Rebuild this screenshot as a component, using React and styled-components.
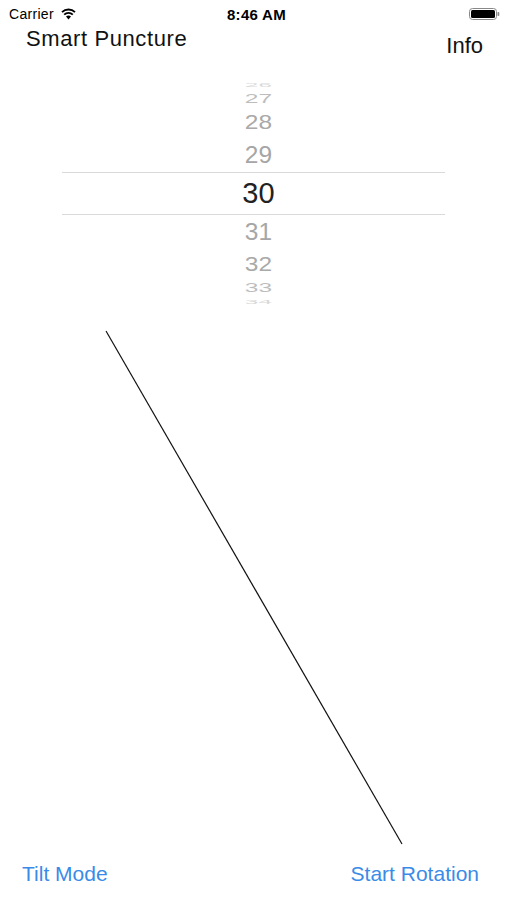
import React from 'react';
import styled, { createGlobalStyle } from 'styled-components';

const Global = createGlobalStyle`
  html, body { margin: 0; padding: 0; background: #fff; }
  body { font-family: "Liberation Sans", Arial, sans-serif; }
`;

const Page = styled.div`
  width: 507px;
  height: 900px;
  display: flex;
  flex-direction: column;
  background: #fff;
  overflow: hidden;
`;

const StatusBar = styled.div`
  height: 28px;
  flex-shrink: 0;
  display: grid;
  grid-template-columns: 1fr auto 1fr;
  align-items: center;
  padding: 0 7px 0 9px;
  font-size: 14px;
  color: #000;
`;

const Carrier = styled.div`
  display: flex;
  align-items: center;
  gap: 7px;
  letter-spacing: 0.3px;
`;

const Clock = styled.div`
  font-weight: bold;
  font-size: 15px;
  letter-spacing: 0.3px;
  padding-left: 4px;
`;

const BatteryWrap = styled.div`
  display: flex;
  justify-content: flex-end;
`;

const Header = styled.div`
  height: 52px;
  flex-shrink: 0;
  display: flex;
  justify-content: space-between;
  padding: 0 24px 0 26px;
`;

const Title = styled.div`
  font-size: 22px;
  line-height: 24px;
  letter-spacing: 0.6px;
  margin-top: -1px;
  color: #111;
`;

const InfoButton = styled.div`
  font-size: 22px;
  line-height: 24px;
  margin-top: 6px;
  color: #111;
`;

const Picker = styled.div`
  margin-left: 62px;
  width: 383px;
  flex-shrink: 0;
  display: flex;
  flex-direction: column;
`;

const Item = styled.div`
  height: ${(p) => p.h}px;
  flex-shrink: 0;
  display: flex;
  align-items: center;
  justify-content: center;
  font-size: ${(p) => (p.selected ? 29 : 24.5)}px;
  color: ${(p) => p.color};
  border-top: ${(p) => (p.selected ? '1px solid #dadada' : 'none')};
  border-bottom: ${(p) => (p.selected ? '1px solid #dadada' : 'none')};
  box-sizing: border-box;
  overflow: visible;
  padding-left: 10px;
`;

const Digits = styled.span`
  display: inline-block;
  transform: scaleY(${(p) => p.sy});
  line-height: 1;
`;

const Canvas = styled.div`
  flex: 1;
  min-height: 0;
  overflow: hidden;

  svg {
    display: block;
  }
`;

const Footer = styled.div`
  height: 44px;
  flex-shrink: 0;
  display: flex;
  align-items: center;
  justify-content: space-between;
  padding: 0 28px 4px 22px;
`;

const Action = styled.div`
  font-size: 21px;
  color: #3a8be8;
`;

const items = [
  { n: 26, h: 10, sy: 0.2, color: '#d9d9d9' },
  { n: 27, h: 19, sy: 0.5, color: '#bdbdbd' },
  { n: 28, h: 29, sy: 0.8, color: '#a9a9a9' },
  { n: 29, h: 34, sy: 0.95, color: '#a6a6a6' },
  { n: 30, h: 43, sy: 1, color: '#222', selected: true },
  { n: 31, h: 34, sy: 0.95, color: '#a6a6a6' },
  { n: 32, h: 31, sy: 0.82, color: '#a9a9a9' },
  { n: 33, h: 17, sy: 0.5, color: '#bdbdbd' },
  { n: 34, h: 11, sy: 0.2, color: '#d9d9d9' },
];

function Wifi() {
  return (
    <svg width="15" height="12" viewBox="0 0 15 12">
      <path d="M7.5 11.5 L5 8.6 A3.6 3.6 0 0 1 10 8.6 Z" fill="#000" />
      <path d="M3.2 6.7 A6.1 6.1 0 0 1 11.8 6.7" stroke="#000" strokeWidth="1.8" fill="none" />
      <path d="M1 4.2 A9.2 9.2 0 0 1 14 4.2" stroke="#000" strokeWidth="1.8" fill="none" />
    </svg>
  );
}

function Battery() {
  return (
    <svg width="31" height="12" viewBox="0 0 31 12">
      <rect x="0.5" y="0.5" width="27" height="11" rx="3" fill="#fff" stroke="#888" />
      <rect x="2" y="2" width="24" height="8" rx="1.5" fill="#000" />
      <rect x="28.5" y="4" width="1.8" height="4" rx="0.8" fill="#888" />
    </svg>
  );
}

export default function App() {
  return (
    <Page>
      <Global />
      <StatusBar>
        <Carrier>
          Carrier <Wifi />
        </Carrier>
        <Clock>8:46 AM</Clock>
        <BatteryWrap>
          <Battery />
        </BatteryWrap>
      </StatusBar>
      <Header>
        <Title>Smart Puncture</Title>
        <InfoButton>Info</InfoButton>
      </Header>
      <Picker>
        {items.map((it) => (
          <Item key={it.n} h={it.h} color={it.color} selected={it.selected}>
            <Digits sy={it.sy}>{it.n}</Digits>
          </Item>
        ))}
      </Picker>
      <Canvas>
        <svg width="507" height="545" viewBox="0 0 507 545">
          <line x1="106" y1="23" x2="402" y2="536" stroke="#111" strokeWidth="1.2" />
        </svg>
      </Canvas>
      <Footer>
        <Action>Tilt Mode</Action>
        <Action>Start Rotation</Action>
      </Footer>
    </Page>
  );
}
